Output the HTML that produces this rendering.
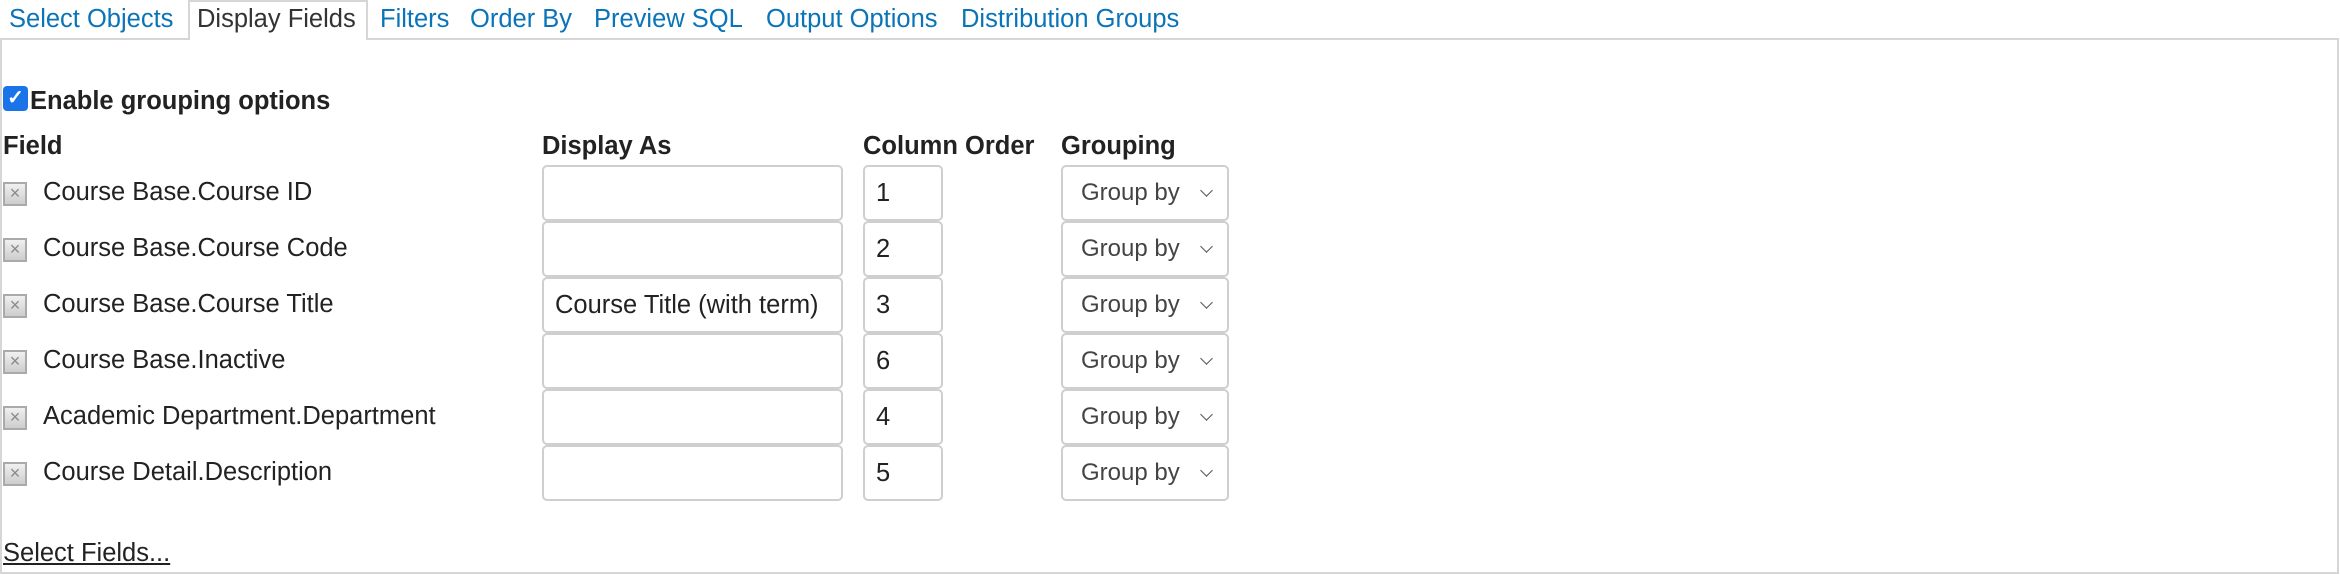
<!DOCTYPE html>
<html><head><meta charset="utf-8"><style>
*{box-sizing:border-box;margin:0;padding:0}
body{width:2340px;height:575px;background:#fff;font-family:"Liberation Sans",Arial,sans-serif;color:#222;position:relative;overflow:hidden}
.a{position:absolute;white-space:nowrap}
.tab{position:absolute;top:0;font-size:25.5px;color:#0a74b9;line-height:38px;white-space:nowrap}
.panel{position:absolute;left:0;top:38px;width:2339px;height:536px;border:2px solid #d6d6d6}
.seltab{position:absolute;left:188px;top:0;width:180px;height:40px;border:2px solid #d6d6d6;border-bottom:none;background:#fff;z-index:2}
.h{font-weight:bold;font-size:25.5px}
.t{font-size:25.5px}
.inp{position:absolute;border:2px solid #cfcfcf;border-radius:5px;height:56px;font-size:25.5px;line-height:52px;padding-left:11px;background:#fff;white-space:nowrap}
.sel{position:absolute;border:2px solid #cfcfcf;border-radius:5px;height:56px;width:168px;left:1061px;font-size:24px;line-height:52px;padding-left:18px;color:#444}
.sel:after{content:"";position:absolute;right:16px;top:19px;width:8px;height:8px;border-right:1.5px solid #555;border-bottom:1.5px solid #555;transform:rotate(45deg)}
.x{position:absolute;left:3px;width:24px;height:24px;border:2px solid #aaa;background:linear-gradient(#f0f0f0,#cdcdcd);color:#888;font-size:18px;line-height:19px;text-align:center}
</style></head><body>
<div class="panel"></div>
<div class="seltab"></div>
<div class="tab" style="left:9px">Select Objects</div>
<div class="tab" style="left:197px;color:#333;z-index:3">Display Fields</div>
<div class="tab" style="left:380px">Filters</div>
<div class="tab" style="left:470px">Order By</div>
<div class="tab" style="left:594px">Preview SQL</div>
<div class="tab" style="left:766px">Output Options</div>
<div class="tab" style="left:961px">Distribution Groups</div>

<div class="a" style="left:3px;top:86px;width:25px;height:25px;background:#1a73e8;border-radius:4px;color:#fff;font-size:20px;line-height:25px;text-align:center;font-weight:bold">✓</div>
<div class="a h" style="left:30px;top:87px">Enable grouping options</div>

<div class="a h" style="left:3px;top:132px">Field</div>
<div class="a h" style="left:542px;top:132px">Display As</div>
<div class="a h" style="left:863px;top:132px">Column Order</div>
<div class="a h" style="left:1061px;top:132px">Grouping</div>

<div class="x" style="top:182px">×</div><div class="a t" style="left:43px;top:178px">Course Base.Course ID</div>
<div class="inp" style="left:542px;top:165px;width:301px"></div><div class="inp" style="left:863px;top:165px;width:80px">1</div><div class="sel" style="top:165px">Group by</div>

<div class="x" style="top:238px">×</div><div class="a t" style="left:43px;top:234px">Course Base.Course Code</div>
<div class="inp" style="left:542px;top:221px;width:301px"></div><div class="inp" style="left:863px;top:221px;width:80px">2</div><div class="sel" style="top:221px">Group by</div>

<div class="x" style="top:294px">×</div><div class="a t" style="left:43px;top:290px">Course Base.Course Title</div>
<div class="inp" style="left:542px;top:277px;width:301px">Course Title (with term)</div><div class="inp" style="left:863px;top:277px;width:80px">3</div><div class="sel" style="top:277px">Group by</div>

<div class="x" style="top:350px">×</div><div class="a t" style="left:43px;top:346px">Course Base.Inactive</div>
<div class="inp" style="left:542px;top:333px;width:301px"></div><div class="inp" style="left:863px;top:333px;width:80px">6</div><div class="sel" style="top:333px">Group by</div>

<div class="x" style="top:406px">×</div><div class="a t" style="left:43px;top:402px">Academic Department.Department</div>
<div class="inp" style="left:542px;top:389px;width:301px"></div><div class="inp" style="left:863px;top:389px;width:80px">4</div><div class="sel" style="top:389px">Group by</div>

<div class="x" style="top:462px">×</div><div class="a t" style="left:43px;top:458px">Course Detail.Description</div>
<div class="inp" style="left:542px;top:445px;width:301px"></div><div class="inp" style="left:863px;top:445px;width:80px">5</div><div class="sel" style="top:445px">Group by</div>

<div class="a t" style="left:3px;top:539px;text-decoration:underline">Select Fields...</div>
</body></html>
